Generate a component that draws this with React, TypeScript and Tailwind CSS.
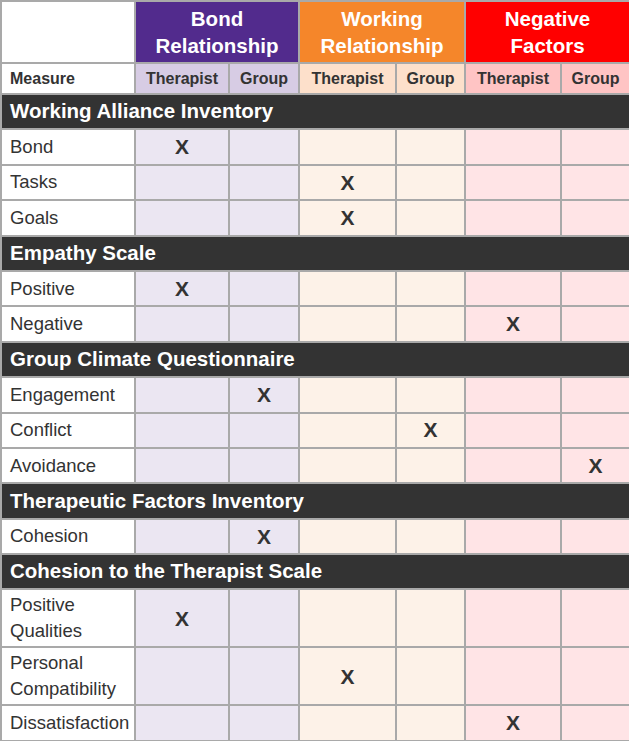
import React from 'react'

type Row = { label: string[]; mark: number; tall?: boolean }
type Section = { title: string; rows: Row[] }

const SECTIONS: Section[] = [
  {
    title: 'Working Alliance Inventory',
    rows: [
      { label: ['Bond'], mark: 0 },
      { label: ['Tasks'], mark: 2 },
      { label: ['Goals'], mark: 2 },
    ],
  },
  {
    title: 'Empathy Scale',
    rows: [
      { label: ['Positive'], mark: 0 },
      { label: ['Negative'], mark: 4 },
    ],
  },
  {
    title: 'Group Climate Questionnaire',
    rows: [
      { label: ['Engagement'], mark: 1 },
      { label: ['Conflict'], mark: 3 },
      { label: ['Avoidance'], mark: 5 },
    ],
  },
  {
    title: 'Therapeutic Factors Inventory',
    rows: [{ label: ['Cohesion'], mark: 1 }],
  },
  {
    title: 'Cohesion to the Therapist Scale',
    rows: [
      { label: ['Positive', 'Qualities'], mark: 0, tall: true },
      { label: ['Personal', 'Compatibility'], mark: 2, tall: true },
      { label: ['Dissatisfaction'], mark: 4 },
    ],
  },
]

const CELL_BG = [
  'bg-[#ebe6f2]',
  'bg-[#ebe6f2]',
  'bg-[#fdf2e8]',
  'bg-[#fdf2e8]',
  'bg-[#ffe4e6]',
  'bg-[#ffe4e6]',
]

const SUB_BG = [
  'bg-[#d7cce4]',
  'bg-[#d7cce4]',
  'bg-[#fde0cb]',
  'bg-[#fde0cb]',
  'bg-[#ffc4c4]',
  'bg-[#ffc4c4]',
]

const b = 'border-2 border-[#a9a9a9]'

export default function App() {
  return (
    <div className="w-[629px] h-[741px] bg-white overflow-hidden font-['Liberation_Sans',Arial,sans-serif] text-[#333]">
      <table className="w-[629px] table-fixed border-collapse">
        <colgroup>
          <col className="w-[134px]" />
          <col className="w-[94px]" />
          <col className="w-[70px]" />
          <col className="w-[97px]" />
          <col className="w-[69px]" />
          <col className="w-[96px]" />
          <col className="w-[69px]" />
        </colgroup>
        <thead>
          <tr className="h-[62px]">
            <th className={`${b} bg-white`} />
            <th colSpan={2} className={`${b} bg-[#522b8d] text-white text-[20.5px] font-bold leading-[27px]`}>
              Bond<br />Relationship
            </th>
            <th colSpan={2} className={`${b} bg-[#f5862a] text-white text-[20.5px] font-bold leading-[27px]`}>
              Working<br />Relationship
            </th>
            <th colSpan={2} className={`${b} bg-[#ff0000] text-white text-[20.5px] font-bold leading-[27px]`}>
              Negative<br />Factors
            </th>
          </tr>
          <tr className="h-[31px]">
            <th className={`${b} bg-white text-left pl-[8px] text-[16px] font-bold`}>Measure</th>
            {['Therapist', 'Group', 'Therapist', 'Group', 'Therapist', 'Group'].map((t, i) => (
              <th key={i} className={`${b} ${SUB_BG[i]} text-[16px] font-bold`}>{t}</th>
            ))}
          </tr>
        </thead>
        <tbody>
          {SECTIONS.map((s) => (
            <React.Fragment key={s.title}>
              <tr className="h-[35.4px]">
                <td colSpan={7} className={`${b} bg-[#333333] text-white text-[20.5px] font-bold pl-[8px]`}>
                  {s.title}
                </td>
              </tr>
              {s.rows.map((r) => (
                <tr key={r.label.join(' ')} className={r.tall ? 'h-[58px]' : 'h-[35.4px]'}>
                  <td className={`${b} bg-white pl-[8px] text-[18.5px] leading-[26px]`}>
                    {r.label.map((l, i) => (
                      <div key={i}>{l}</div>
                    ))}
                  </td>
                  {CELL_BG.map((bg, i) => (
                    <td key={i} className={`${b} ${bg} text-center text-[21px] font-bold`}>
                      {r.mark === i ? 'X' : ''}
                    </td>
                  ))}
                </tr>
              ))}
            </React.Fragment>
          ))}
        </tbody>
      </table>
    </div>
  )
}
